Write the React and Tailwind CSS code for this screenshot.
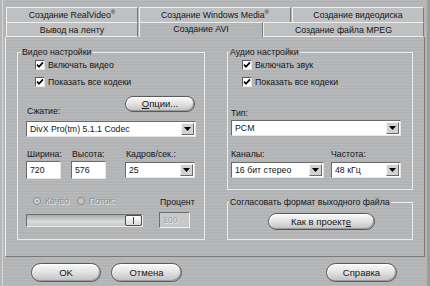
import React from "react";

function Check({ label }) {
  return (
    <div className="flex items-center h-[10px]">
      <div className="w-[10px] h-[10px] bg-white border border-t-[#5e5e5e] border-l-[#5e5e5e] border-r-[#e4e4e4] border-b-[#e4e4e4] flex items-center justify-center">
        <svg width="8" height="8" viewBox="0 0 8 8">
          <path d="M1 3.6 L3 5.8 L7 1.4" stroke="#000" strokeWidth="1.7" fill="none" />
        </svg>
      </div>
      <span className="ml-[3px] leading-[10px]">{label}</span>
    </div>
  );
}

function Select({ value, className }) {
  return (
    <div className={"h-[16px] bg-white border border-t-[#6a6a6a] border-l-[#6a6a6a] border-r-[#e6e6e6] border-b-[#e6e6e6] flex items-center " + className}>
      <span className="flex-1 pl-[3px] leading-[10px] whitespace-nowrap overflow-hidden">{value}</span>
      <div className="w-[13px] h-[12px] mr-[1px] bg-[#d2d2d2] border border-t-[#f4f4f4] border-l-[#f4f4f4] border-r-[#6a6a6a] border-b-[#6a6a6a] flex items-center justify-center">
        <svg width="7" height="4" viewBox="0 0 7 4">
          <path d="M0 0 H7 L3.5 4 Z" fill="#000" />
        </svg>
      </div>
    </div>
  );
}

function Input({ value, className }) {
  return (
    <div className={"h-[18px] bg-white border border-t-[#6a6a6a] border-l-[#6a6a6a] border-r-[#e6e6e6] border-b-[#e6e6e6] flex items-center pl-[3px] leading-[10px] " + className}>
      {value}
    </div>
  );
}

function Btn({ children, className }) {
  return (
    <div className={"rounded-full border border-[#5a5a5a] bg-[linear-gradient(to_bottom,#fafafa_0%,#e4e4e4_45%,#c0c0c0_100%)] shadow-[inset_-1px_-1px_0_#9a9a9a,inset_1px_1px_0_#ffffff] flex items-center justify-center leading-[10px] text-[9.5px] " + className}>
      {children}
    </div>
  );
}

function Tab({ children, className }) {
  return (
    <div className={"flex items-center justify-center leading-[10px] whitespace-nowrap " + className}>
      {children}
    </div>
  );
}

export default function App() {
  return (
    <div className="w-[430px] h-[286px] overflow-hidden text-[8.75px] text-[#151515] font-['Liberation_Sans',Arial,sans-serif] bg-[repeating-linear-gradient(180deg,#b8babc_0px,#b8babc_1px,#b1b3b5_1px,#b1b3b5_3px)] shadow-[inset_2px_0_0_#b4b6b8,inset_3px_0_0_#d8d8d8,inset_-3px_0_0_#9c9c9c] flex flex-col">
      {/* Tabs */}
      <div className="pl-[6px] pt-[7px] flex flex-col">
        <div className="flex h-[15px]">
          <Tab className="w-[132px] bg-[#bec0c2] border-t border-l border-[#eeeeee] border-r border-r-[#7a7a7a]">
            Создание RealVideo<sup className="text-[6px] leading-none">®</sup>
          </Tab>
          <Tab className="w-[152px] ml-[1px] bg-[#bec0c2] border-t border-l border-[#eeeeee] border-r border-r-[#7a7a7a]">
            Создание Windows Media<sup className="text-[6px] leading-none">®</sup>
          </Tab>
          <Tab className="w-[132px] ml-[1px] bg-[#bec0c2] border-t border-l border-[#eeeeee] border-r border-r-[#7a7a7a]">
            Создание видеодиска
          </Tab>
        </div>
        <div className="flex h-[15px]">
          <Tab className="w-[132px] bg-[#bec0c2] border-t border-l border-b border-[#eeeeee] border-r border-r-[#7a7a7a]">
            Вывод на ленту
          </Tab>
          <Tab className="w-[124px] ml-[1px] border-t border-l border-[#eeeeee] border-r border-r-[#7a7a7a] pb-[3px]">
            Создание AVI
          </Tab>
          <Tab className="w-[161px] bg-[#bec0c2] border-t border-l border-b border-[#eeeeee] border-r border-r-[#7a7a7a]">
            Создание файла MPEG
          </Tab>
        </div>
      </div>

      {/* Panel */}
      <div className="ml-[5px] w-[420px] h-[220px] border-l border-l-[#eeeeee] border-r border-r-[#7a7a7a] border-b border-b-[#7a7a7a] flex px-[11px] pt-[10px]">
        {/* Video group */}
        <fieldset className="w-[189px] h-[193px] border border-[#ececec]">
          <legend className="ml-[3px] px-[1px] leading-[10px]">Видео настройки</legend>
          <div className="flex flex-col">
            <div className="pl-[17px] mt-[3px]">
              <Check label="Включать видео" />
            </div>
            <div className="pl-[17px] mt-[7px]">
              <Check label="Показать все кодеки" />
            </div>
            <div className="px-[8px] flex flex-col">
              <div className="flex items-end justify-between mt-[9px]">
                <span className="ml-[1px] leading-[10px] mb-[-4px]">Сжатие:</span>
                <Btn className="w-[70px] h-[16px] mr-[1px]">
                  <span><span className="underline">О</span>пции...</span>
                </Btn>
              </div>
              <Select value="DivX Pro(tm) 5.1.1 Codec" className="mt-[9px] w-full" />
              <div className="flex items-start mt-[12px]">
                <div className="w-[35px] flex flex-col">
                  <span className="ml-[1px] leading-[10px]">Ширина:</span>
                  <Input value="720" className="mt-[2px] w-[35px]" />
                </div>
                <div className="w-[35px] ml-[10px] flex flex-col">
                  <span className="ml-[1px] leading-[10px]">Высота:</span>
                  <Input value="576" className="mt-[2px] w-[35px]" />
                </div>
                <div className="w-[70px] ml-[19px] flex flex-col">
                  <span className="ml-[1px] leading-[10px]">Кадров/сек.:</span>
                  <Select value="25" className="mt-[3px] w-[70px]" />
                </div>
              </div>
              <div className="flex items-start mt-[17px]">
                <div className="w-[117px] flex flex-col">
                  <div className="flex items-center h-[10px] pl-[7px] text-[#8e8e8e] [text-shadow:1px_1px_0_#e8e8e8]">
                    <div className="w-[8px] h-[8px] rounded-full bg-[#d0d0d0] border border-[#8a8a8a] flex items-center justify-center">
                      <div className="w-[2px] h-[2px] rounded-full bg-[#8a8a8a]" />
                    </div>
                    <span className="ml-[4px] leading-[10px]">Качво</span>
                    <div className="ml-[8px] w-[8px] h-[8px] rounded-full bg-[#c4c4c4] border border-[#8a8a8a]" />
                    <span className="ml-[4px] leading-[10px]">Поток:</span>
                  </div>
                  <div className="mt-[8px] h-[13px] w-[117px] border border-t-[#6e6e6e] border-l-[#6e6e6e] border-r-[#eeeeee] border-b-[#eeeeee] bg-[linear-gradient(to_bottom,#a8aaac,#dadcdc_60%,#c8c8c8)] flex justify-end">
                    <div className="w-[17px] h-full rounded-[2px] border border-[#4e4e4e] bg-[linear-gradient(to_bottom,#ffffff,#d8d8d8)] flex items-center justify-center">
                      <div className="w-[1px] h-[7px] bg-[#444]" />
                    </div>
                  </div>
                </div>
                <div className="ml-[16px] flex flex-col">
                  <span className="ml-[1px] leading-[10px] mt-[1px]">Процент</span>
                  <div className="mt-[5px] w-[31px] h-[16px] bg-[#c6c8ca] border border-t-[#6e6e6e] border-l-[#6e6e6e] border-r-[#eeeeee] border-b-[#eeeeee] flex items-center pl-[3px] leading-[10px] text-[#a4a4a4] [text-shadow:1px_1px_0_#e4e4e4]">
                    100
                  </div>
                </div>
              </div>
            </div>
          </div>
        </fieldset>

        {/* Right column */}
        <div className="ml-[22px] w-[186px] flex flex-col">
          <fieldset className="w-[186px] h-[143px] border border-[#ececec]">
            <legend className="ml-[1px] px-[1px] leading-[10px]">Аудио настройки</legend>
            <div className="flex flex-col">
              <div className="pl-[14px] mt-[3px]">
                <Check label="Включать звук" />
              </div>
              <div className="pl-[14px] mt-[7px]">
                <Check label="Показать все кодеки" />
              </div>
              <div className="pl-[3px] pr-[11px] flex flex-col">
                <span className="leading-[10px] mt-[21px]">Тип:</span>
                <Select value="PCM" className="mt-[2px] w-full" />
                <div className="flex mt-[13px]">
                  <div className="w-[93px] flex flex-col">
                    <span className="leading-[10px]">Каналы:</span>
                    <Select value="16 бит стерео" className="mt-[3px] w-[93px]" />
                  </div>
                  <div className="ml-[7px] flex-1 flex flex-col">
                    <span className="leading-[10px]">Частота:</span>
                    <Select value="48 кГц" className="mt-[3px] w-full" />
                  </div>
                </div>
              </div>
            </div>
          </fieldset>
          <fieldset className="mt-[7px] w-[186px] h-[43px] border border-[#ececec]">
            <legend className="ml-[1px] px-[1px] leading-[10px]">Согласовать формат выходного файла</legend>
            <div className="flex justify-center mt-[6px]">
              <Btn className="w-[107px] h-[17px] ml-[2px]">
                <span>Как в проект<span className="underline">е</span></span>
              </Btn>
            </div>
          </fieldset>
        </div>
      </div>

      {/* Bottom buttons */}
      <div className="flex mt-[6px] pl-[31px] pr-[33px]">
        <Btn className="w-[70px] h-[19px]">OK</Btn>
        <Btn className="w-[71px] h-[19px] ml-[10px]">Отмена</Btn>
        <Btn className="w-[71px] h-[19px] ml-auto">Справка</Btn>
      </div>
    </div>
  );
}
